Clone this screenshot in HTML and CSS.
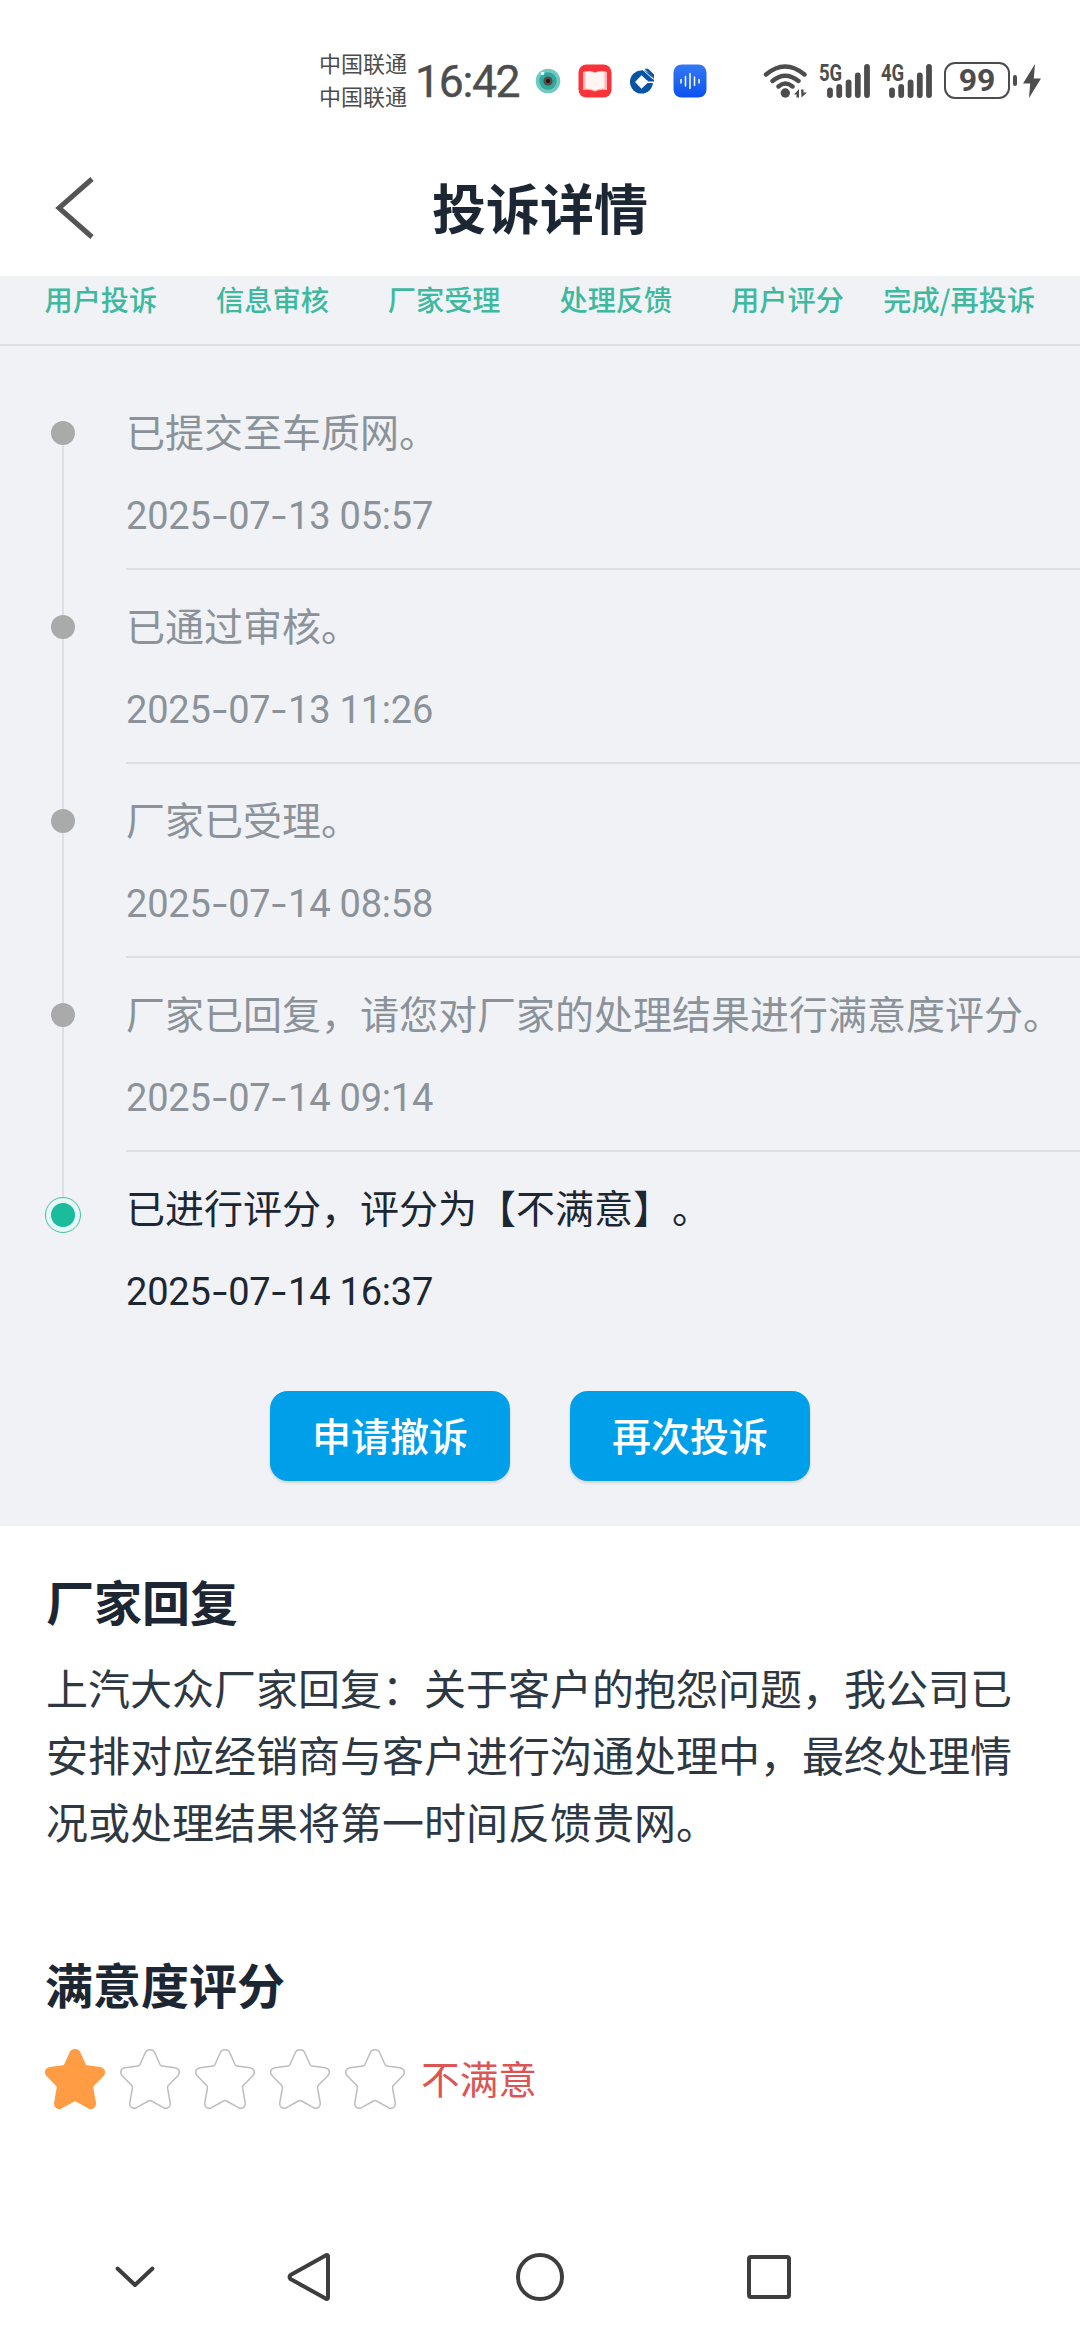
FILE: index.html
```html
<!DOCTYPE html>
<html lang="zh-CN">
<head>
<meta charset="utf-8">
<title>投诉详情</title>
<link rel="stylesheet" href="styles.css">
</head>
<body>
<svg class="defs" width="0" height="0">
  <symbol id="star" viewBox="0 0 60 60">
    <path d="M30 .8C32.600 .8 34.200 2.200 35.100 4.500L40 15.500Q40.500 16.800 42 17L55 18.700C59.300 19.400 60.600 23.500 57.800 26.800L48.500 36.300Q47.400 37.500 47.600 39.200L50.200 53.500C50.800 58 47.500 60.500 43.500 58.700L31.500 52Q30 51.200 28.500 52L16.500 58.700C12.500 60.500 9.200 58 9.800 53.500L12.400 39.200Q12.600 37.500 11.500 36.300L2.200 26.800C-.6 23.500 .7 19.400 5 18.700L18 17Q19.500 16.800 20 15.500L24.900 4.500C25.800 2.200 27.400 .8 30 .8Z"/>
  </symbol>
  <symbol id="bars" viewBox="0 0 44 34">
    <g stroke="#4d4d4d" stroke-width="5.800" stroke-linecap="round"><path d="M3 26.500V31M12.200 23V31M21.600 18.500V31M30.800 11.500V31M40 3V31"/></g>
  </symbol>
</svg>
<div class="screen">
  <header class="status">
    <div class="carriers"><span>中国联通</span><span>中国联通</span></div>
    <div class="clock">16:42</div>
    <svg class="app-camera" viewBox="0 0 26 26"><circle cx="13" cy="13" r="12.300" fill="#71c9c0"/><circle cx="13" cy="13" r="8.700" fill="#2fa99d"/><circle cx="13" cy="13" r="4.600" fill="#5c4840"/><circle cx="13" cy="13" r="2" fill="#171717"/><circle cx="7.500" cy="5.500" r="1.800" fill="#d8fffb"/></svg>
    <svg class="app-book" viewBox="0 0 34 34"><rect x=".5" y=".5" width="33" height="33" rx="8" fill="#f8343a"/><path d="M5 8Q11 6 17 8.500Q23 6 29 8V26Q22 25 17 27.500Q12 25 5 26Z" fill="#fbb5b2"/><path d="M7.500 8Q13 7 17 9Q21 7 26.500 8V24.500Q21 24 17 26.500Q13 24 7.500 24.500Z" fill="#fff4f2"/></svg>
    <svg class="app-bank" viewBox="0 0 26 26"><circle cx="12.500" cy="14" r="11.500" fill="#0754a3"/><path d="M12.500 7.200L18 12.500H26V15H18.500L12.500 20.800L6 14Z" fill="#fff"/><path d="M12 2.500H16L25 11V13.500H18.500L20 10.500Z" fill="#0754a3"/><path d="M12.500 .500L24.500 11.500" stroke="#fff" stroke-width="1"/><path d="M15.500 .800H19L25 6.500V10.500Z" fill="#0754a3"/></svg>
    <svg class="app-voice" viewBox="0 0 34 34"><defs><linearGradient id="voice" x2="0" y2="1"><stop stop-color="#3479f4"/><stop offset="1" stop-color="#0b52ef"/></linearGradient></defs><rect x=".5" y=".5" width="33" height="33" rx="8" fill="url(#voice)"/><path d="M8 15.500V19M12.500 12.500V22M17 9.500V24.500M21.500 13V21.500M26 15.500V19" stroke="#fff" stroke-width="1.500" stroke-linecap="round"/></svg>
    <svg class="wifi" viewBox="0 0 46 36"><g fill="none" stroke="#4d4d4d" stroke-width="4.400" stroke-linecap="round"><path d="M3 11.500Q22 -4.500 41.500 11.500M9.500 18Q22 7.500 35.500 18M15.500 23.500Q22.300 17.500 29.500 23.500"/></g><circle cx="22.300" cy="30" r="4.700" fill="#4d4d4d"/><path d="M31 31.500L36 26V34.500H33.500V31.500ZM38 26.500H40.500V29.500H44L38.500 34.500Z" fill="#4d4d4d"/></svg>
    <div class="signal s5"><span>5G</span><svg viewBox="0 0 44 34"><use href="#bars"/></svg></div>
    <div class="signal s4"><span>4G</span><svg viewBox="0 0 44 34"><use href="#bars"/></svg></div>
    <div class="battery">99</div>
    <i class="battery-tip"></i>
    <svg class="bolt" viewBox="0 0 18 34"><path d="M12 0L0 19.500H7.200L6 34L18 14.500H10.800Z" fill="#4d4d4d"/></svg>
  </header>

  <div class="titlebar">
    <svg class="back" viewBox="0 0 40 64"><path d="M37 3L4 32L37 61" fill="none" stroke="#555" stroke-width="5"/></svg>
    <h1>投诉详情</h1>
  </div>

  <main>
    <section class="progress">
      <nav class="steps"><span>用户投诉</span><span>信息审核</span><span>厂家受理</span><span>处理反馈</span><span>用户评分</span><span>完成/再投诉</span></nav>
      <ol class="timeline">
        <li><div class="rail"><i></i></div><div class="event"><p>已提交至车质网。</p><time>2025<b>-</b>07<b>-</b>13 05:57</time></div></li>
        <li><div class="rail"><i></i></div><div class="event"><p>已通过审核。</p><time>2025<b>-</b>07<b>-</b>13 11:26</time></div></li>
        <li><div class="rail"><i></i></div><div class="event"><p>厂家已受理。</p><time>2025<b>-</b>07<b>-</b>14 08:58</time></div></li>
        <li><div class="rail"><i></i></div><div class="event"><p>厂家已回复，请您对厂家的处理结果进行满意度评分。</p><time>2025<b>-</b>07<b>-</b>14 09:14</time></div></li>
        <li class="current"><div class="rail"><i></i></div><div class="event"><p>已进行评分，评分为【不满意】。</p><time>2025<b>-</b>07<b>-</b>14 16:37</time></div></li>
      </ol>
      <div class="actions"><button>申请撤诉</button><button>再次投诉</button></div>
    </section>

    <section class="reply">
      <h2>厂家回复</h2>
      <p>上汽大众厂家回复：关于客户的抱怨问题，我公司已安排对应经销商与客户进行沟通处理中，最终处理情况或处理结果将第一时间反馈贵网。</p>
    </section>

    <section class="rating">
      <h2>满意度评分</h2>
      <div class="stars">
        <svg class="on"><use href="#star"/></svg>
        <svg><use href="#star"/></svg>
        <svg><use href="#star"/></svg>
        <svg><use href="#star"/></svg>
        <svg><use href="#star"/></svg>
        <span>不满意</span>
      </div>
    </section>
  </main>

  <footer class="navbar">
    <svg class="nav-down" viewBox="0 0 42 24"><path d="M3.500 3.500L21 20L38.500 3.500"/></svg>
    <svg class="nav-back" viewBox="0 0 46 52"><path d="M40.500 4L4.500 24Q2.500 26 4.500 28L40.500 48Q42 48 42 46V6Q42 4 40.500 4Z"/></svg>
    <svg class="nav-home" viewBox="0 0 50 50"><circle cx="25" cy="25" r="22"/></svg>
    <svg class="nav-recent" viewBox="0 0 46 46"><rect x="3" y="3" width="40" height="40" rx="2"/></svg>
  </footer>
</div>
</body>
</html>
```
FILE: styles.css
```css
* { box-sizing: border-box; margin: 0; padding: 0; }
body {
  font-family: "Noto Sans CJK SC", sans-serif;
  background: #fff;
  color: #1c2733;
  text-spacing-trim: space-all;
}
.defs { display: block; height: 0; }
.screen { width: 1080px; height: 2340px; display: flex; flex-direction: column; overflow: hidden; }
svg { display: block; flex: none; }

.status { display: flex; height: 161px; align-items: center; padding-left: 319px; color: #4d4d4d; }
.carriers { display: flex; flex-direction: column; font-size: 22px; line-height: 33px; width: 96px; white-space: nowrap; padding-bottom: 4px; }
.clock { font: 400 44.500px/60px Roboto, sans-serif; width: 120px; letter-spacing: -1.300px; padding-top: 2px; -webkit-text-stroke: .4px #4d4d4d; }
.app-camera { width: 26px; height: 26px; }
.app-book { width: 34px; height: 34px; margin-left: 17px; }
.app-bank { width: 26px; height: 26px; margin-left: 17px; }
.app-voice { width: 34px; height: 34px; margin-left: 18px; }
.wifi { width: 46px; height: 36px; margin-left: 56px; }
.signal { display: grid; height: 34px; }
.signal span, .signal svg { grid-area: 1 / 1; }
.signal span { font: 700 24px/17px Roboto, sans-serif; width: 30px; transform: scaleX(.77); transform-origin: 0 0; margin-top: 1px; }
.signal svg { width: 44px; height: 34px; margin-left: 8px; }
.s5 { margin-left: 10px; }
.s4 { margin-left: 10px; }
.battery { width: 66px; height: 37px; border: 2.500px solid #4d4d4d; border-radius: 11px; margin-left: 11px; font: 700 32px/33px Roboto, sans-serif; text-align: center; }
.battery-tip { width: 4px; height: 11px; border-radius: 2px; background: #4d4d4d; margin-left: 3px; }
.bolt { width: 18px; height: 34px; margin-left: 6px; }

.titlebar { display: grid; grid-template-columns: 95px 1fr 95px; align-items: center; height: 115px; padding-bottom: 22px; }
.back { width: 40px; height: 64px; margin-left: 55px; }
h1 { font-size: 54px; line-height: 80px; font-weight: 700; text-align: center; margin-top: -2px; }

.progress { background: #f0f2f6; height: 1250px; }
.steps { display: grid; grid-template-columns: repeat(6, 1fr); height: 70px; padding: 3px 35px 0 15px; border-bottom: 2px solid #dcdfe4; color: #3eb99f; font-size: 28.200px; line-height: 40px; font-weight: 500; text-align: center; white-space: nowrap; }
.timeline { list-style: none; padding-top: 30px; }
.timeline li { display: grid; grid-template-columns: 126px 1fr; height: 194px; color: #8b9299; }
.rail { display: flex; flex-direction: column; align-items: center; background: linear-gradient(#dcdfe4, #dcdfe4) 62px 0 / 2px 100% no-repeat; }
.rail i { width: 24px; height: 24px; border-radius: 50%; background: #aaa; margin-top: 45px; }
.timeline li:first-child .rail { background-position: 62px 57px; }
.event { border-bottom: 2px solid #dcdfe4; padding-top: 25px; }
.event p { font-size: 39px; line-height: 58px; white-space: nowrap; }
.event time { display: block; font: 400 38px/50px Roboto, sans-serif; margin-top: 32px; letter-spacing: -.2px; }
.event b { font-weight: 400; display: inline-block; width: 17.500px; text-align: center; transform: scaleX(1.4); }
.timeline .current { color: #1c2733; }
.current .event { border-bottom: 0; }
.current .rail { background-size: 2px 46px; }
.current .rail i { width: 36px; height: 36px; border: 1.500px solid #45bea8; background: radial-gradient(circle, #1abc9c 11.500px, #e7f8f9 12.500px); margin-top: 45px; }
.actions { display: flex; justify-content: center; gap: 60px; margin-top: 45px; }
button { width: 240px; height: 90px; padding-bottom: 3px; border: 0; border-radius: 18px; background: #009fe9; color: #fff; font: 500 39px/87px "Noto Sans CJK SC", sans-serif; box-shadow: 0 2px 3px #0002; }

.reply { padding: 39px 45px 0 46px; }
h2 { font-size: 48px; line-height: 70px; font-weight: 700; }
.reply p { color: #2e3843; font-size: 42px; line-height: 67px; margin-top: 18px; width: 972px; }
.rating { padding: 94px 45px 0; }
.stars { display: flex; align-items: center; gap: 15px; margin-top: 31px; color: #dc5555; font-size: 38.700px; }
.stars span { line-height: 56px; padding: 0 0 4px 1px; }
.stars svg { width: 60px; height: 60px; fill: none; stroke: #bdbdbd; stroke-width: 1.500; }
.stars .on { fill: #ff9c44; stroke: #ff9c44; }

.navbar { display: flex; align-items: center; height: 126px; margin-top: auto; fill: none; }
.navbar svg { stroke: #3d3d3d; stroke-width: 4; stroke-linejoin: round; stroke-linecap: round; }
.nav-down { width: 42px; height: 24px; margin-left: 114px; }
.nav-back { width: 46px; height: 52px; margin-left: 130px; }
.nav-home { width: 50px; height: 50px; margin-left: 183px; }
.nav-recent { width: 46px; height: 46px; margin-left: 181px; }
```
